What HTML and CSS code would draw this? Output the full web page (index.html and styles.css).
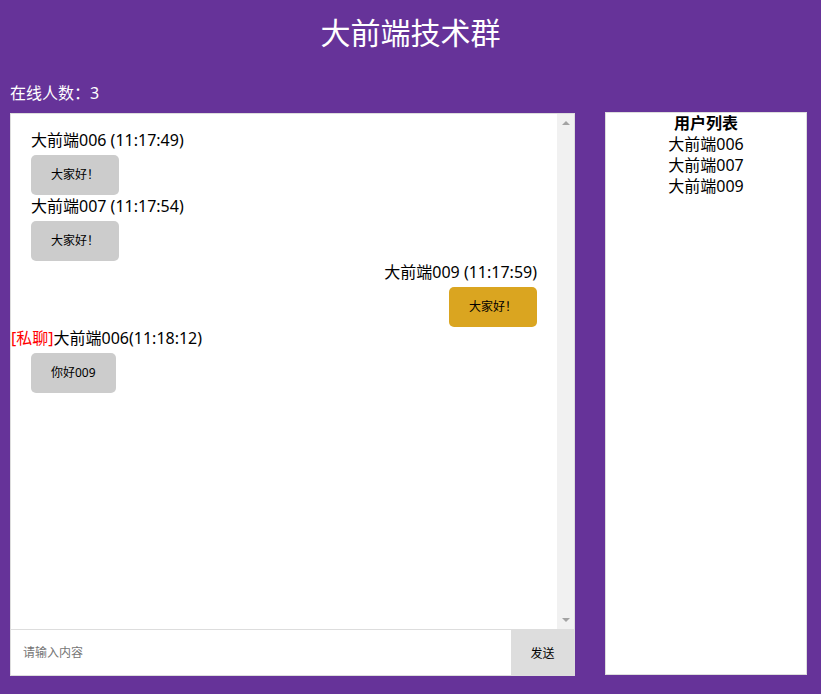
FILE: index.html
```html
<!DOCTYPE html>
<html lang="zh-CN">
<head>
<meta charset="utf-8">
<title>大前端技术群</title>
<link rel="stylesheet" href="styles.css">
</head>
<body>
<h1 class="title">大前端技术群</h1>
<div class="online">在线人数：3</div>
<div class="main">
  <div class="chat">
    <div class="chat-body">
      <div class="messages">
        <div class="msg">
          <div class="msg-name">大前端006 (11:17:49)</div>
          <div class="bubble">大家好！</div>
        </div>
        <div class="msg">
          <div class="msg-name">大前端007 (11:17:54)</div>
          <div class="bubble">大家好！</div>
        </div>
        <div class="msg msg-self">
          <div class="msg-name">大前端009 (11:17:59)</div>
          <div class="bubble bubble-self">大家好！</div>
        </div>
        <div class="msg msg-private">
          <div class="msg-name"><span class="tag">[私聊]</span>大前端006(11:18:12)</div>
          <div class="bubble">你好009</div>
        </div>
      </div>
      <div class="scrollbar">
        <span class="arrow arrow-up"></span>
        <span class="arrow arrow-down"></span>
      </div>
    </div>
    <div class="composer">
      <input class="composer-input" type="text" placeholder="请输入内容">
      <button class="send" type="button">发送</button>
    </div>
  </div>
  <aside class="users">
    <div class="users-title">用户列表</div>
    <div class="user">大前端006</div>
    <div class="user">大前端007</div>
    <div class="user">大前端009</div>
  </aside>
</div>
</body>
</html>
```

FILE: styles.css
```css
* {
  box-sizing: border-box;
}

html, body {
  margin: 0;
  padding: 0;
}

body {
  background: #663399;
  font-family: "Noto Sans", "Noto Sans CJK SC", sans-serif;
  color: #000;
  font-size: 16px;
  height: 694px;
  overflow: hidden;
}

.title {
  margin: 0;
  height: 68px;
  padding-top: 13px;
  font-size: 30px;
  line-height: 40px;
  font-weight: normal;
  text-align: center;
  color: #fff;
}

.online {
  margin: 15px 0 0 10px;
  line-height: 21px;
  height: 21px;
  color: #fff;
}

.main {
  display: flex;
  align-items: flex-start;
  margin: 9px 0 0 10px;
  gap: 30px;
}

.chat {
  width: 565px;
  height: 563px;
  background: #fff;
  border: 1px solid #ddd;
  display: flex;
  flex-direction: column;
}

.chat-body {
  height: 515px;
  display: flex;
}

.messages {
  flex: 1;
  padding-top: 16px;
}

.msg {
  padding: 0 20px;
  margin-bottom: 1px;
}

.msg-name {
  height: 21px;
  line-height: 21px;
  margin-bottom: 4px;
  white-space: nowrap;
}

.msg-private .msg-name {
  margin-left: -20px;
}

.tag {
  color: #f00;
}

.bubble {
  display: inline-block;
  height: 40px;
  line-height: 40px;
  padding: 0 20px;
  font-size: 12px;
  border-radius: 5px;
  background: #ccc;
}

.msg-self {
  text-align: right;
}

.bubble-self {
  background: #daa520;
}

.scrollbar {
  width: 17px;
  background: #f1f1f1;
  display: flex;
  flex-direction: column;
  justify-content: space-between;
  align-items: center;
  padding: 7px 0 7px;
}

.arrow {
  width: 0;
  height: 0;
  border-left: 4px solid transparent;
  border-right: 4px solid transparent;
}

.arrow-up {
  border-bottom: 4px solid #a3a3a3;
}

.arrow-down {
  border-top: 4px solid #a3a3a3;
}

.composer {
  flex: 1;
  display: flex;
  border-top: 1px solid #ddd;
}

.composer-input {
  flex: 1;
  min-width: 0;
  border: none;
  outline: none;
  padding: 0 0 0 12px;
  font-family: inherit;
  font-size: 12px;
  color: #000;
  background: #fff;
}

.composer-input::placeholder {
  color: #757575;
}

.send {
  width: 63px;
  border: none;
  margin: 0 0 -1px;
  background: #ddd;
  font-family: inherit;
  font-size: 12px;
  color: #000;
  padding: 0;
}

.users {
  width: 202px;
  height: 563px;
  margin-top: -1px;
  background: #fff;
  border: 1px solid #ddd;
  text-align: center;
}

.users-title {
  font-weight: bold;
  line-height: 21px;
}

.user {
  line-height: 21px;
}
```
